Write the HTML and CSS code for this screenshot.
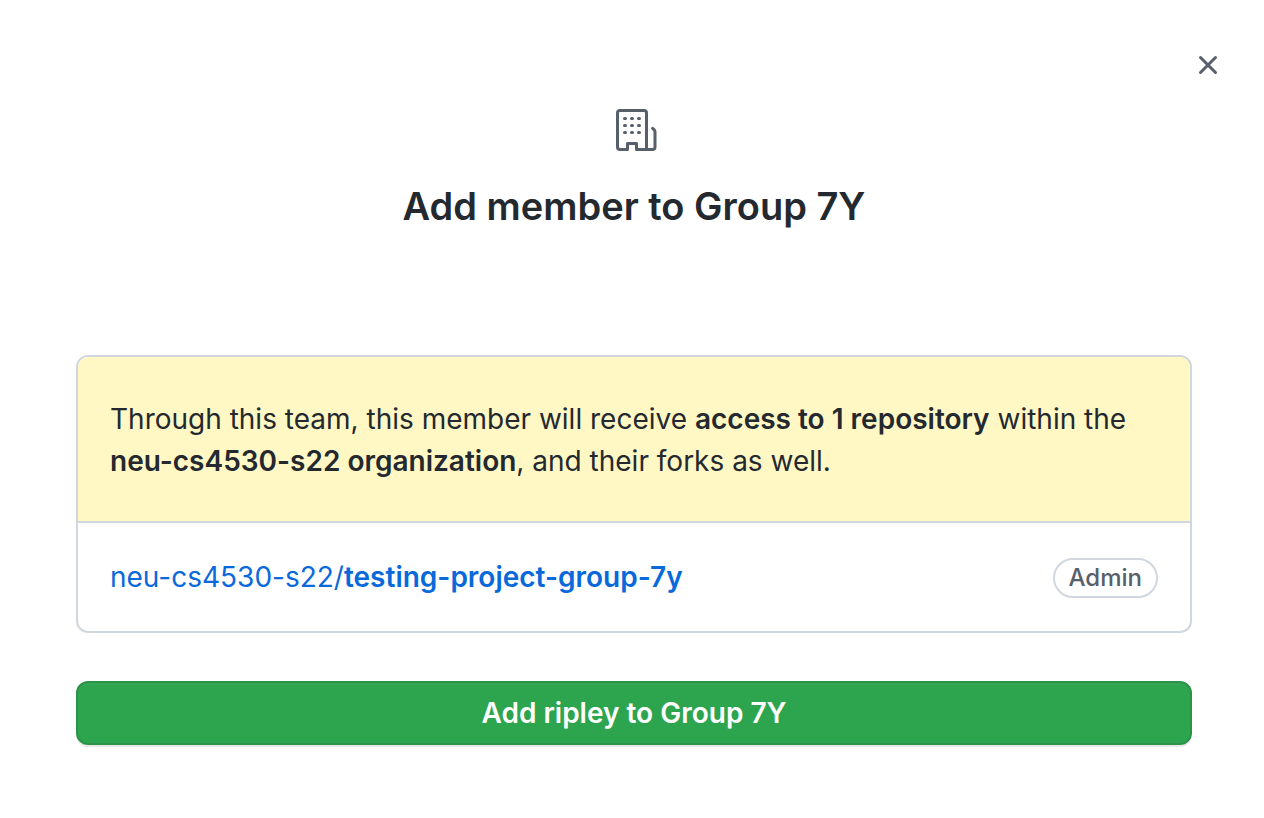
FILE: index.html
```html
<!DOCTYPE html>
<html lang="en">
<head>
<meta charset="utf-8">
<meta name="viewport" content="width=device-width, initial-scale=1">
<title>Add member to Group 7Y</title>
<link rel="stylesheet" href="styles.css">
</head>
<body>
<main class="dialog">
  <button class="close" type="button" aria-label="Close">
    <svg width="20" height="20" viewBox="0 0 20 20" aria-hidden="true">
      <path d="M2.5 2.5l15 15M17.5 2.5l-15 15"/>
    </svg>
  </button>
  <header class="heading">
    <svg class="org-icon" width="48" height="48" viewBox="0 0 48 48" aria-hidden="true">
      <path d="M17.5 43.5h-7.500a2.500 2.500 0 0 1-2.500-2.500v-34a2.500 2.500 0 0 1 2.500-2.500h24a2.500 2.500 0 0 1 2.500 2.500v36.500M17.500 43.500v-6h9v6h16a2.500 2.500 0 0 0 2.500-2.500v-15c0-1-.3-1.700-1-2.400l-1.400-1.300"/>
      <path d="M14.500 12.500h1M21.500 12.500h1M28.500 12.500h1M14.500 19.500h1M21.500 19.500h1M28.500 19.500h1M14.500 26.500h1M21.500 26.500h1M28.500 26.500h1"/>
    </svg>
    <h1 class="title">Add member to Group 7Y</h1>
  </header>
  <section class="box">
    <p class="notice">Through this team, this member will receive <strong>access to 1 repository</strong> within the <strong>neu-cs4530-s22 organization</strong>, and their forks as well.</p>
    <div class="repo">
      <a class="repo-link" href="#">neu-cs4530-s22/<strong>testing-project-group-7y</strong></a>
      <span class="label">Admin</span>
    </div>
  </section>
  <button class="submit" type="button">Add ripley to Group 7Y</button>
</main>
</body>
</html>
```
FILE: styles.css
```css
* {
  box-sizing: border-box;
}

body {
  margin: 0;
  background: #fff;
  color: #24292f;
  font: 28px/42px Inter, "Liberation Sans", sans-serif;
}

strong {
  font-weight: 600;
}

.dialog {
  display: flex;
  flex-direction: column;
  padding: 48px 72px 48px 76px;
}

.close {
  align-self: flex-end;
  display: flex;
  margin-right: -32px;
  padding: 7px 6px;
  border: 0;
  background: none;
  cursor: pointer;
}

.close svg {
  fill: none;
  stroke: #57606a;
  stroke-width: 3;
  stroke-linecap: round;
}

.heading {
  display: flex;
  flex-direction: column;
  align-items: center;
  gap: 22px;
  margin-top: 24px;
}

.org-icon {
  fill: none;
  stroke: #57606a;
  stroke-width: 3;
  stroke-linecap: round;
  stroke-linejoin: round;
}

.title {
  margin: 0;
  font-size: 38px;
  font-weight: 600;
  line-height: 60px;
}

.box {
  margin-top: 119px;
  overflow: hidden;
  border: 2px solid #d0d7de;
  border-radius: 12px;
}

.notice {
  margin: 0;
  padding: 41px 32px 39px;
  border-bottom: 2px solid #d0d7de;
  background: #fff8c5;
}

.repo {
  display: flex;
  align-items: flex-end;
  justify-content: space-between;
  padding: 33px 32px;
}

.repo-link {
  color: #0969da;
  text-decoration: none;
}

.label {
  padding: 0 14px;
  border: 2px solid #d0d7de;
  border-radius: 20px;
  color: #57606a;
  font-size: 24px;
  font-weight: 500;
  line-height: 36px;
}

.submit {
  height: 64px;
  margin-top: 48px;
  border: 2px solid #2b9348;
  border-radius: 12px;
  background: #2da44e;
  box-shadow: 0 2px 0 rgba(27, 31, 36, 0.1), inset 0 2px 0 rgba(255, 255, 255, 0.03);
  color: #fff;
  font: inherit;
  font-weight: 600;
  cursor: pointer;
}
```
